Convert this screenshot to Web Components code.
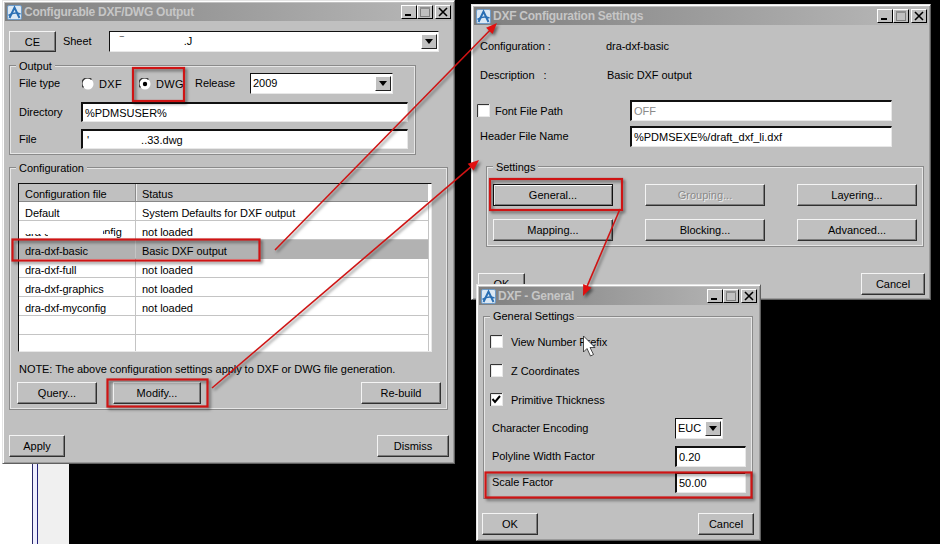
<!DOCTYPE html>
<html>
<head>
<meta charset="utf-8">
<style>
html, body { margin: 0; padding: 0; background: #000; }
body { width: 940px; height: 544px; overflow: hidden; position: relative; font: 11px "Liberation Sans", Arial, sans-serif; color: #000; }
</style>
</head>
<body>
<cad-backdrop></cad-backdrop>

<cad-window caption="Configurable DXF/DWG Output" x="2" y="0" w="453" h="464">
	<cad-row top="10">
		<cad-button w="47" h="21">CE</cad-button>
		<cad-label left="7" w="46">Sheet</cad-label>
		<cad-combo w="330"><span style="margin-left:8px;color:#444">&#8254;</span><span style="margin-left:60px">.J</span></cad-combo>
	</cad-row>
	<cad-group caption="Output" top="13" w="407" h="90">
		<cad-row top="7" h="21">
			<cad-label w="63">File type</cad-label>
			<cad-radio w="57">DXF</cad-radio>
			<cad-radio checked w="56">DWG</cad-radio>
			<cad-label w="55">Release</cad-label>
			<cad-combo w="143">2009</cad-combo>
		</cad-row>
		<cad-row top="8">
			<cad-label w="62">Directory</cad-label>
			<cad-input w="327" h="20">%PDMSUSER%</cad-input>
		</cad-row>
		<cad-row top="7">
			<cad-label w="62">File</cad-label>
			<cad-input w="327" h="20"><span style="margin-left:2px">'</span><span style="margin-left:52px">..33.dwg</span></cad-input>
		</cad-row>
	</cad-group>
	<cad-group caption="Configuration" top="12" w="439" h="243" pad="8">
		<cad-table top="15"></cad-table>
		<cad-row top="10" h="15"><cad-label left="1">NOTE: The above configuration settings apply to DXF or DWG file generation.</cad-label></cad-row>
		<cad-row top="5" between left="-1" w="424">
			<cad-row>
				<cad-button w="80">Query...</cad-button>
				<cad-button w="88" left="16">Modify...</cad-button>
			</cad-row>
			<cad-button w="80">Re-build</cad-button>
		</cad-row>
	</cad-group>
	<cad-row top="25" between w="440">
		<cad-button w="56">Apply</cad-button>
		<cad-button w="72">Dismiss</cad-button>
	</cad-row>
</cad-window>

<cad-window caption="DXF Configuration Settings" x="471" y="4" w="460" h="296">
	<cad-row top="15" left="2"><cad-label w="125">Configuration :</cad-label><cad-label left="1">dra-dxf-basic</cad-label></cad-row>
	<cad-row top="16" left="2"><cad-label w="127">Description&nbsp;&nbsp; :</cad-label><cad-label>Basic DXF output</cad-label></cad-row>
	<cad-row top="18" left="-1">
		<cad-check w="153">Font File Path</cad-check>
		<cad-input w="262" muted>OFF</cad-input>
	</cad-row>
	<cad-row top="5" left="2">
		<cad-label w="150">Header File Name</cad-label>
		<cad-input w="262">%PDMSEXE%/draft_dxf_li.dxf</cad-input>
	</cad-row>
	<cad-group caption="Settings" top="19" left="8" w="438" h="81" pad="6">
		<cad-grid top="17"></cad-grid>
	</cad-group>
	<cad-row top="26" between w="447">
		<cad-button w="47">OK</cad-button>
		<cad-button w="64">Cancel</cad-button>
	</cad-row>
</cad-window>

<cad-window caption="DXF - General" x="476" y="284" w="285" h="257">
	<cad-group caption="General Settings" top="11" w="270" h="183" pad="5" capy="-7">
		<cad-row top="14" left="1"><cad-check w="200" gap="8">View Number Prefix</cad-check></cad-row>
		<cad-row top="8" left="1"><cad-check w="200" gap="8">Z Coordinates</cad-check></cad-row>
		<cad-row top="8" left="1"><cad-check w="200" gap="8" checked>Primitive Thickness</cad-check></cad-row>
		<cad-row top="8" left="3">
			<cad-label w="183">Character Encoding</cad-label>
			<cad-combo w="48">EUC</cad-combo>
		</cad-row>
		<cad-row top="7" left="3">
			<cad-label w="183">Polyline Width Factor</cad-label>
			<cad-input w="71">0.20</cad-input>
		</cad-row>
		<cad-row top="5" left="3">
			<cad-label w="183">Scale Factor</cad-label>
			<cad-input w="71">50.00</cad-input>
		</cad-row>
	</cad-group>
	<cad-row top="14" between w="272" left="-1">
		<cad-button w="56">OK</cad-button>
		<cad-button w="56">Cancel</cad-button>
	</cad-row>
</cad-window>

<cad-markup></cad-markup>

<script>
// every component shares the same base font rule
const BASE = `
	:host { font: 11px "Liberation Sans", Arial, sans-serif; color: #000; box-sizing: border-box; }
	* { box-sizing: border-box; }
`;

class CadBackdrop extends HTMLElement {
	constructor() {
		super();
		this.attachShadow({mode: 'open'}).innerHTML = `
			<style>
			:host { position: absolute; left: 0; top: 0; width: 940px; height: 544px; }
			.strip { position: absolute; left: 0; top: 0; width: 69px; height: 544px;
				background: linear-gradient(90deg, #fff 0 32px, #2a2a6a 32px 33px, #eef 33px 37px, #22227a 37px 38px, #f0f0f0 38px); }
			</style>
			<div class="strip"></div>`;
	}
}

class CadWindow extends HTMLElement {
	constructor() {
		super();
		this.attachShadow({mode: 'open'}).innerHTML = `
			<style>${BASE}
			:host { position: absolute; display: block; background: #c0c0c0;
				border: 1px solid; border-color: #e4e4e4 #606060 #606060 #e4e4e4; padding: 2px;
				box-shadow: inset 1px 1px 0 #fff, inset -1px -1px 0 #9a9a9a; }
			.title { height: 18px; display: flex; align-items: center; padding: 0 1px 0 2px;
				background: linear-gradient(90deg, #7f7f7f, #b9b9b9);
				color: #c6c6c6; font: bold 12px "Liberation Sans", Arial, sans-serif; letter-spacing: -.25px; }
			.title span { flex: 1; margin-left: 2px; white-space: nowrap; }
			.title svg { display: block; flex: none; }
			.tb { width: 16px; height: 14px; flex: none; background: #c0c0c0;
				border: 1px solid; border-color: #fff #000 #000 #fff; display: flex; }
			.tb svg { margin: auto; }
			.tb.x { margin-left: 2px; }
			.body { padding: 0 0 0 4px; }
			</style>
			<div class="title">
				<svg width="15" height="15" viewBox="0 0 15 15">
					<rect x=".5" y=".5" width="14" height="14" rx="1.5" fill="#dbe8f4" stroke="#6f9cc8"/>
					<path d="M2.5 13 L7.5 2.5 L12.5 13" fill="none" stroke="#2a6fb4" stroke-width="2"/>
					<path d="M1.5 10.5 Q7 6.5 13.5 9" fill="none" stroke="#2a6fb4" stroke-width="1.6"/>
				</svg>
				<span>${this.getAttribute('caption')}</span>
				<div class="tb"><svg width="10" height="10"><rect x="1" y="7" width="6" height="2" fill="#000"/></svg></div>
				<div class="tb"><svg width="10" height="10"><rect x=".5" y=".5" width="9" height="9" fill="none" stroke="#7e7e7e"/><rect x="0" y="0" width="10" height="2" fill="#8e8e8e"/></svg></div>
				<div class="tb x"><svg width="10" height="10"><path d="M1 1 L9 9 M9 1 L1 9" stroke="#000" stroke-width="1.6"/></svg></div>
			</div>
			<div class="body"><slot></slot></div>`;
		this.style.left = this.getAttribute('x') + 'px';
		this.style.top = this.getAttribute('y') + 'px';
		this.style.width = this.getAttribute('w') + 'px';
		this.style.height = this.getAttribute('h') + 'px';
	}
}

// flow helper, top/left are the gaps to the previous sibling
function applyBox(el) {
	const a = (n) => el.getAttribute(n);
	if (a('top')) el.style.marginTop = a('top') + 'px';
	if (a('left')) el.style.marginLeft = a('left') + 'px';
	if (a('w')) el.style.width = a('w') + 'px';
	if (a('h')) el.style.height = a('h') + 'px';
}

class CadRow extends HTMLElement {
	constructor() {
		super();
		this.attachShadow({mode: 'open'}).innerHTML = `
			<style>${BASE}
			:host { display: flex; align-items: center; }
			:host([between]) { justify-content: space-between; }
			</style><slot></slot>`;
		applyBox(this);
	}
}

class CadGroup extends HTMLElement {
	constructor() {
		super();
		const pad = this.getAttribute('pad') || '9';
		const capy = this.getAttribute('capy') || '-6';
		this.attachShadow({mode: 'open'}).innerHTML = `
			<style>${BASE}
			:host { display: block; position: relative; border: 1px solid #8a8a8a;
				box-shadow: 0 0 0 1px #e6e6e6 inset; padding: 0 0 0 ${pad}px; }
			.cap { position: absolute; left: 6px; top: ${capy}px; background: #c0c0c0; padding: 0 3px; line-height: 13px; white-space: nowrap; letter-spacing: -.05px; }
			</style>
			<div class="cap">${this.getAttribute('caption')}</div><slot></slot>`;
		applyBox(this);
	}
}

class CadLabel extends HTMLElement {
	constructor() {
		super();
		this.attachShadow({mode: 'open'}).innerHTML = `
			<style>${BASE}
			:host { display: block; flex: none; white-space: nowrap; line-height: 13px; letter-spacing: -.05px; }
			</style><slot></slot>`;
		applyBox(this);
	}
}

class CadButton extends HTMLElement {
	constructor() {
		super();
		this.attachShadow({mode: 'open'}).innerHTML = `
			<style>${BASE}
			:host { display: flex; flex: none; align-items: center; justify-content: center; height: 22px; background: #c0c0c0;
				border: 1px solid; border-color: #f4f4f4 #303030 #303030 #f4f4f4;
				box-shadow: inset -1px -1px 0 #7c7c7c; }
			:host([dim]) { color: #8a8a8a; text-shadow: 1px 1px 0 #eee; }
			:host([heavy]) { border-color: #111; box-shadow: inset 1px 1px 0 #fff, inset -1px -1px 0 #7c7c7c; }
			</style><slot></slot>`;
		applyBox(this);
	}
}

class CadInput extends HTMLElement {
	constructor() {
		super();
		this.attachShadow({mode: 'open'}).innerHTML = `
			<style>${BASE}
			:host { display: flex; flex: none; align-items: center; height: 21px; background: #fff; padding-left: 2px; white-space: nowrap;
				border-style: solid; border-width: 2px 1px 1px 2px; border-color: #111 #e8e8e8 #e8e8e8 #111; }
			:host([muted]) { color: #8a8a8a; }
			</style><slot></slot>`;
		applyBox(this);
	}
}

class CadCombo extends HTMLElement {
	constructor() {
		super();
		this.attachShadow({mode: 'open'}).innerHTML = `
			<style>${BASE}
			:host { display: flex; flex: none; align-items: center; height: 21px; background: #fff; padding: 0 1px 0 2px;
				border-style: solid; border-width: 1px; border-color: #111 #e8e8e8 #e8e8e8 #111; white-space: nowrap; }
			.txt { flex: 1; position: relative; top: -1px; }
			.drop { width: 16px; height: 15px; flex: none; background: #c0c0c0; display: flex;
				border: 1px solid; border-color: #fff #222 #222 #fff; }
			.drop svg { margin: auto; }
			</style>
			<div class="txt"><slot></slot></div>
			<div class="drop"><svg width="8" height="5"><path d="M0 0 H8 L4 5 Z" fill="#000"/></svg></div>`;
		applyBox(this);
	}
}

class CadRadio extends HTMLElement {
	constructor() {
		super();
		const dot = this.hasAttribute('checked') ? '<circle cx="6" cy="6" r="2.2" fill="#000"/>' : '';
		this.attachShadow({mode: 'open'}).innerHTML = `
			<style>${BASE}
			:host { display: flex; flex: none; align-items: center; height: 20px; letter-spacing: .3px; }
			svg { margin-right: 5px; display: block; }
			</style>
			<svg width="12" height="12" viewBox="0 0 12 12">
				<circle cx="6" cy="6" r="5.5" fill="#fff"/>
				<path d="M1.5 9.5 A5.5 5.5 0 0 1 9.5 1.5" fill="none" stroke="#333" stroke-width="1.2"/>
				${dot}
			</svg><slot></slot>`;
		applyBox(this);
	}
}

class CadCheck extends HTMLElement {
	constructor() {
		super();
		const tick = this.hasAttribute('checked') ? '<path d="M2.5 6 L5 9 L10 3" fill="none" stroke="#000" stroke-width="2"/>' : '';
		const gap = this.getAttribute('gap') || '5';
		this.attachShadow({mode: 'open'}).innerHTML = `
			<style>${BASE}
			:host { display: flex; flex: none; align-items: center; height: 21px; white-space: nowrap; letter-spacing: -.05px; }
			svg { margin-right: ${gap}px; display: block; flex: none; }
			</style>
			<svg width="13" height="13" viewBox="0 0 13 13">
				<rect width="13" height="13" fill="#e8e8e8"/>
				<rect x="2" y="2" width="10" height="10" fill="#fff"/>
				<path d="M.5 13 V.5 H12" fill="none" stroke="#333"/>
				${tick}
			</svg><slot></slot>`;
		applyBox(this);
	}
}

const CONFIG_ROWS = [
	['Default', 'System Defaults for DXF output'],
	['dra-dxf-sheet-config', 'not loaded'],
	['dra-dxf-basic', 'Basic DXF output'],
	['dra-dxf-full', 'not loaded'],
	['dra-dxf-graphics', 'not loaded'],
	['dra-dxf-myconfig', 'not loaded'],
	['', ''],
	['', '']
];

class CadTable extends HTMLElement {
	constructor() {
		super();
		const rows = CONFIG_ROWS.map((r, i) => `
			<div class="tr ${i === 2 ? 'sel' : ''}">
				<div class="a">${r[0]}</div><div class="b">${r[1]}</div>
			</div>`).join('');
		this.attachShadow({mode: 'open'}).innerHTML = `
			<style>${BASE}
			:host { display: block; position: relative; width: 414px; height: 169px; background: #fff;
				border-style: solid; border-width: 1px; border-color: #111 #e8e8e8 #e8e8e8 #111; overflow: hidden; letter-spacing: -.05px; }
			.head, .tr { display: flex; width: 409px; align-items: stretch; }
			.head { height: 18px; background: #c0c0c0; border-bottom: 1px solid #888; }
			.tr { height: 19px; border-bottom: 1px solid #c4c4c4; background: #fff; white-space: nowrap; }
			.tr.sel { background: #b2b2b2; border-bottom-color: #b2b2b2; }
			.a { width: 117px; padding: 1px 0 0 6px; border-right: 1px solid #c4c4c4; line-height: 18px; flex: none; }
			.head .a { border-right: 1px solid #8a8a8a; box-shadow: 1px 0 0 #eee; }
			.b { padding: 1px 0 0 6px; line-height: 18px; }
			.tr .a, .tr .b { padding-top: 2px; }
			.patch { position: absolute; background: #fff; }
			.side { position: absolute; left: 409px; top: 18px; bottom: 0; width: 1px; background: #c4c4c4; }
			</style>
			<div class="head"><div class="a">Configuration file</div><div class="b">Status</div></div>
			${rows}
			<div class="side"></div>
			<div class="patch" style="left:6px;top:37px;width:78px;height:13px"></div>
			<div class="patch" style="left:29px;top:50px;width:66px;height:5px"></div>
			<div class="patch" style="left:84px;top:37px;width:32px;height:6px"></div>`;
		applyBox(this);
	}
}

const SETTINGS = [
	['General...', 'heavy'], ['Grouping...', 'dim'], ['Layering...', ''],
	['Mapping...', ''], ['Blocking...', ''], ['Advanced...', '']
];

class CadGrid extends HTMLElement {
	constructor() {
		super();
		this.attachShadow({mode: 'open'}).innerHTML = `
			<style>${BASE}
			:host { display: grid; grid-template-columns: repeat(3, 120px); column-gap: 32px; row-gap: 13px; }
			</style>
			${SETTINGS.map(s => `<cad-button ${s[1]}>${s[0]}</cad-button>`).join('')}`;
		applyBox(this);
	}
}

// hand drawn red annotations and the mouse pointer, lie over all windows
class CadMarkup extends HTMLElement {
	constructor() {
		super();
		const box = (x, y, w, h) => `<rect x="${x}" y="${y}" width="${w}" height="${h}" fill="none" stroke="#cf1414" stroke-width="2.2"/>`;
		const arrow = (x1, y1, x2, y2) => {
			const a = Math.atan2(y2 - y1, x2 - x1);
			const p = (d, s) => `${x2 - d * Math.cos(a) + s * Math.sin(a)},${y2 - d * Math.sin(a) - s * Math.cos(a)}`;
			return `<line x1="${x1}" y1="${y1}" x2="${x2 - 8 * Math.cos(a)}" y2="${y2 - 8 * Math.sin(a)}" stroke="#cf1414" stroke-width="1.6"/>
				<polygon points="${x2},${y2} ${p(11, 4.5)} ${p(11, -4.5)}" fill="#e01010"/>`;
		};
		this.attachShadow({mode: 'open'}).innerHTML = `
			<style>
			:host { position: absolute; left: 0; top: 0; width: 940px; height: 544px; pointer-events: none; }
			svg { display: block; position: absolute; left: 0; top: 0; }
			.red { filter: drop-shadow(2px 2px 1.5px rgba(0,0,0,.5)); }
			</style>
			<svg width="940" height="544" viewBox="0 0 940 544">
				<g class="red">
					${box(133, 68, 51, 33)}
					${box(12.5, 239.5, 247, 21)}
					${box(107.5, 379.5, 100, 27)}
					${box(490, 179, 132, 31)}
					${box(485.5, 472.5, 266, 25)}
					${arrow(275, 250, 497, 23)}
					${arrow(212, 388, 479, 160)}
					${arrow(620, 209, 583, 296)}
				</g>
				<path d="M583.5 336 V352 L587 348.5 L590.5 356 L593.5 354.5 L590 347.5 L595 347.5 Z" fill="#fff" stroke="#222" stroke-width=".8"/>
			</svg>`;
	}
}

customElements.define('cad-backdrop', CadBackdrop);
customElements.define('cad-window', CadWindow);
customElements.define('cad-row', CadRow);
customElements.define('cad-group', CadGroup);
customElements.define('cad-label', CadLabel);
customElements.define('cad-button', CadButton);
customElements.define('cad-input', CadInput);
customElements.define('cad-combo', CadCombo);
customElements.define('cad-radio', CadRadio);
customElements.define('cad-check', CadCheck);
customElements.define('cad-table', CadTable);
customElements.define('cad-grid', CadGrid);
customElements.define('cad-markup', CadMarkup);
</script>
</body>
</html>
